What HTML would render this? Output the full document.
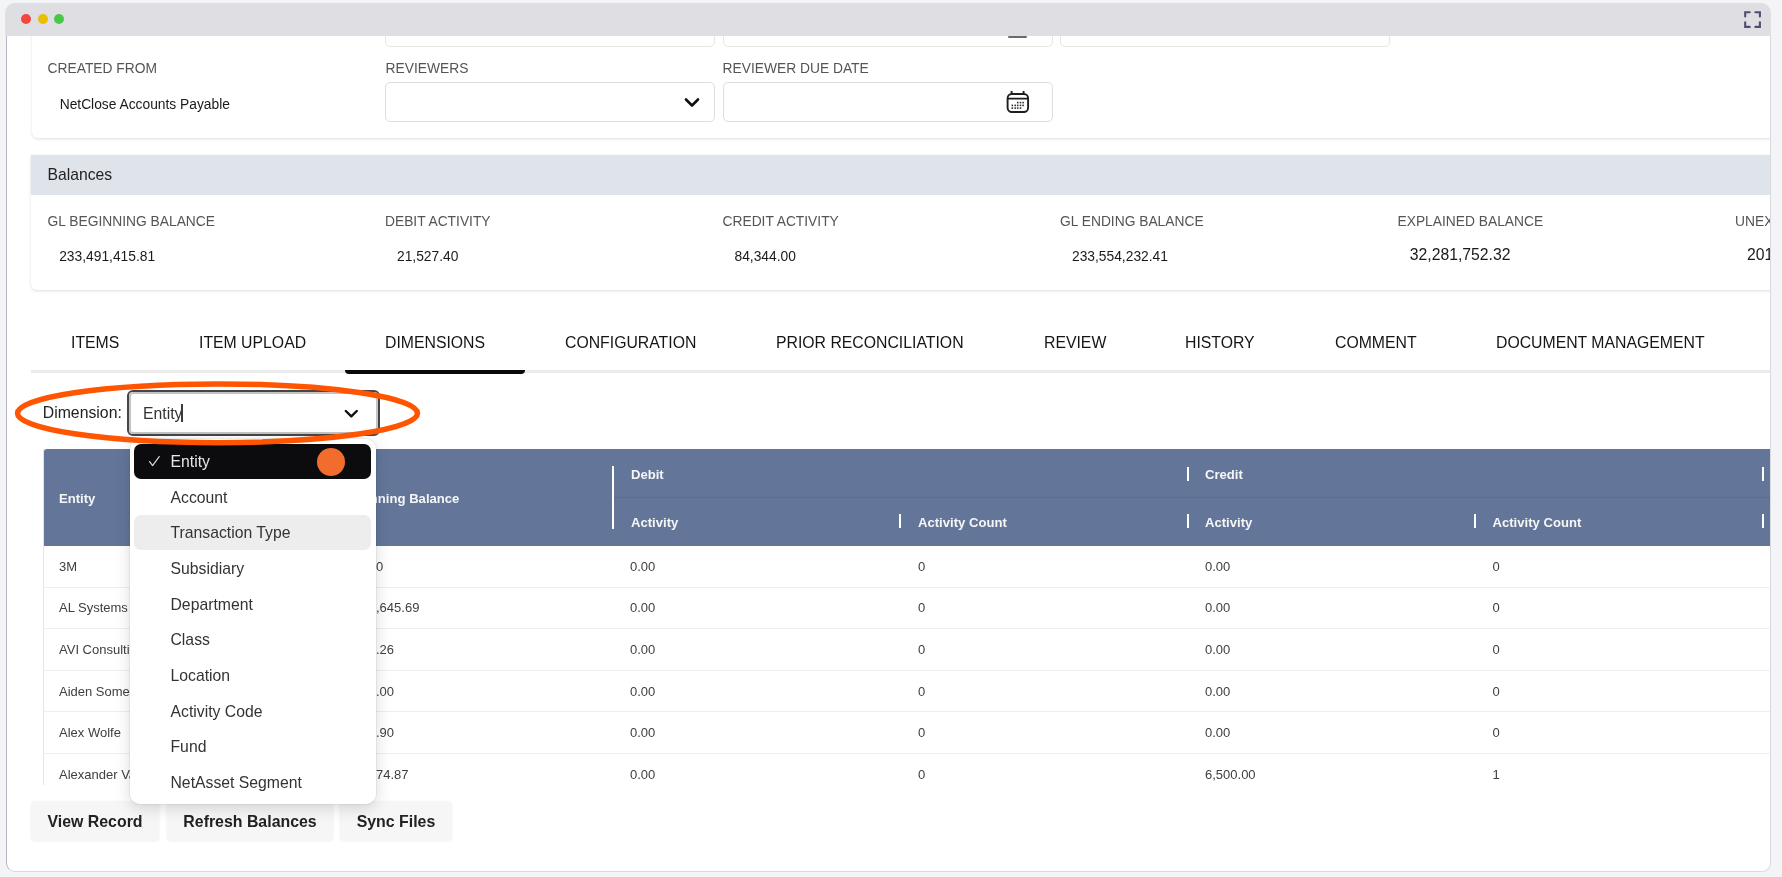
<!DOCTYPE html>
<html><head><meta charset="utf-8">
<style>
*{box-sizing:border-box;margin:0;padding:0}
html,body{width:1782px;height:877px;overflow:hidden;background:#f3f4f6;font-family:"Liberation Sans",sans-serif;color:#222}
.abs{position:absolute}
#win{position:absolute;left:5.5px;top:30px;width:1765.5px;height:842px;border-radius:0 0 9px 9px;background:#fff;border:1.5px solid #dad9e0;border-top:0;border-left:1.5px solid #b8b6c6}
#clip{will-change:transform;position:absolute;left:7px;top:36px;width:1763px;height:834px;overflow:hidden;border-radius:0 0 9px 9px}
#in{position:absolute;left:-7px;top:-36px;width:1782px;height:877px}
#tb{position:absolute;left:5px;top:3px;width:1766px;height:33px;background:#dfdee3;border-radius:10px 10px 0 0}
.dot{position:absolute;top:10px;width:10px;height:10px;border-radius:50%}
.lbl{position:absolute;font-size:13.8px;color:#555;white-space:nowrap;line-height:1}
.val{position:absolute;font-size:13.8px;color:#1a1a1a;white-space:nowrap;line-height:1}
.field{position:absolute;border:1px solid #dedede;border-radius:5px;background:#fff}
.card{position:absolute;background:#fff;border-radius:6px;box-shadow:0 1px 3px rgba(0,0,0,0.14)}
.btn{position:absolute;top:801px;height:39.3px;background:#f6f6f6;border-radius:4px;box-shadow:0 1px 3px rgba(0,0,0,0.07);padding-top:0.6px;font-size:15.9px;font-weight:700;color:#222;text-align:center;line-height:39.5px;white-space:nowrap}
.tab{position:absolute;top:334.6px;font-size:15.8px;color:#151515;white-space:nowrap;line-height:1}
</style></head><body>
<div id="win"></div>
<div id="clip"><div id="in">
  <!-- top card -->
  <div class="card" style="left:31.5px;top:-20px;width:1800px;height:158px;box-shadow:0 1px 3px rgba(0,0,0,0.13)"></div>
  <div class="field" style="left:385px;top:8px;width:330px;height:38.5px;border-color:#e6e6e6"></div>
  <div class="field" style="left:723px;top:8px;width:330px;height:38.5px;border-color:#e6e6e6"></div>
  <div class="field" style="left:1060px;top:8px;width:330px;height:38.5px;border-color:#e6e6e6"></div>
  <div class="lbl" style="left:47.6px;top:62px">CREATED FROM</div>
  <div class="lbl" style="left:385.6px;top:62px">REVIEWERS</div>
  <div class="lbl" style="left:722.6px;top:62px">REVIEWER DUE DATE</div>
  <div class="val" style="left:59.7px;top:98px">NetClose Accounts Payable</div>
  <div class="field" style="left:385px;top:82px;width:330px;height:40px"></div>
  <div class="field" style="left:723px;top:82px;width:330px;height:40px"></div>

  <!-- balances card -->
  <div class="card" style="left:31px;top:155px;width:1800px;height:135px;overflow:hidden;border-radius:0 0 6px 6px">
    <div class="abs" style="left:0;top:0;width:100%;height:40px;background:#dfe3ea"></div>
  </div>
  <div class="abs" style="left:47.6px;top:167px;font-size:15.7px;line-height:1;color:#222">Balances</div>
  <div class="lbl" style="left:47.6px;top:215px">GL BEGINNING BALANCE</div>
  <div class="lbl" style="left:385px;top:215px">DEBIT ACTIVITY</div>
  <div class="lbl" style="left:722.5px;top:215px">CREDIT ACTIVITY</div>
  <div class="lbl" style="left:1060px;top:215px">GL ENDING BALANCE</div>
  <div class="lbl" style="left:1397.5px;top:215px">EXPLAINED BALANCE</div>
  <div class="lbl" style="left:1735px;top:215px">UNEXPLAINED BALANCE</div>
  <div class="val" style="left:59.2px;top:250px">233,491,415.81</div>
  <div class="val" style="left:397px;top:250px">21,527.40</div>
  <div class="val" style="left:734.5px;top:250px">84,344.00</div>
  <div class="val" style="left:1072px;top:250px">233,554,232.41</div>
  <div class="val" style="left:1409.8px;top:246.8px;font-size:15.75px">32,281,752.32</div>
  <div class="val" style="left:1747px;top:246.8px;font-size:15.75px">201,272,479.09</div>

  <!-- tabs -->
  <div class="abs" style="left:31px;top:370px;width:1760px;height:3px;background:#ebebeb"></div>
  <div class="abs" style="left:345.2px;top:370px;width:179.8px;height:4.3px;background:#080808;border-radius:0 0 4px 4px"></div>
  <div class="tab" style="left:71px">ITEMS</div>
  <div class="tab" style="left:199px">ITEM UPLOAD</div>
  <div class="tab" style="left:385px">DIMENSIONS</div>
  <div class="tab" style="left:565px">CONFIGURATION</div>
  <div class="tab" style="left:776px">PRIOR RECONCILIATION</div>
  <div class="tab" style="left:1044px">REVIEW</div>
  <div class="tab" style="left:1185px">HISTORY</div>
  <div class="tab" style="left:1335px">COMMENT</div>
  <div class="tab" style="left:1496px">DOCUMENT MANAGEMENT</div>

  <!-- icons in top fields -->
  <svg class="abs" style="left:684px;top:97px" width="16" height="11" viewBox="0 0 16 11" fill="none" stroke="#111" stroke-width="2.6" stroke-linecap="round" stroke-linejoin="round"><path d="M2 2.5L8 8.5L14 2.5"/></svg>
  <svg class="abs" style="left:1005px;top:90px" width="26" height="26" viewBox="0 0 26 26" fill="none" stroke="#1e1e1e" stroke-width="1.9"><rect x="2.6" y="4" width="20.5" height="18" rx="4.2"/><path d="M2.6 8.6H23.1M6.6 1V4.5M18.6 1V4.5"/><g fill="#333" stroke="none"><rect x="11.9" y="11.8" width="1.6" height="1.6"/><rect x="14.7" y="11.8" width="1.6" height="1.6"/><rect x="17.3" y="11.8" width="1.6" height="1.6"/><rect x="6.5" y="14.6" width="1.6" height="1.6"/><rect x="9.4" y="14.6" width="1.6" height="1.6"/><rect x="11.9" y="14.6" width="1.6" height="1.6"/><rect x="14.7" y="14.6" width="1.6" height="1.6"/><rect x="17.3" y="14.6" width="1.6" height="1.6"/><rect x="6.5" y="17.3" width="1.6" height="1.6"/><rect x="9.4" y="17.3" width="1.6" height="1.6"/><rect x="11.9" y="17.3" width="1.6" height="1.6"/><rect x="14.7" y="17.3" width="1.6" height="1.6"/></g></svg>
  <div class="abs" style="left:1008.3px;top:36.2px;width:18.7px;height:1.9px;background:#6a6a6a;border-radius:1px"></div>

  <!-- dimension -->
  <div class="abs" style="left:42.8px;top:405.3px;font-size:15.8px;line-height:1;color:#222">Dimension:</div>
  <div class="abs" style="left:127px;top:390px;width:252.5px;height:46.3px;border:2px solid #464646;border-radius:6px;background:#fff">
    <div class="abs" style="left:0;top:0;right:0;bottom:0;border:2px solid #c4c4c4;border-radius:4px"></div>
  </div>
  <div class="abs" style="left:143px;top:406px;font-size:15.76px;line-height:1;color:#333">Entity</div>
  <div class="abs" style="left:181.4px;top:404.4px;width:1.8px;height:17.3px;background:#3a3a3a"></div>
  <svg class="abs" style="left:342px;top:407px" width="18" height="13" viewBox="0 0 18 13" fill="none" stroke="#111" stroke-width="2.4" stroke-linecap="round" stroke-linejoin="round"><path d="M3.8 4L9.3 9.4L14.8 4"/></svg>

  <!-- table -->
  <div class="abs" style="left:43px;top:449px;width:1760px;height:336px;overflow:hidden;border-left:1px solid #e4e4e4">
    <div class="abs" style="left:0;top:0;width:100%;height:97px;background:#63769a;border-radius:3px 0 0 0"></div>
    <div class="abs" style="left:570px;top:47.5px;width:1200px;height:1px;background:#5a6d8f"></div>
  </div>
  <div style="position:absolute;font-size:13.1px;font-weight:700;color:#f6f6f6;line-height:1;white-space:nowrap;left:59px;top:491.5px">Entity</div>
<div style="position:absolute;font-size:13.1px;font-weight:700;color:#f6f6f6;line-height:1;white-space:nowrap;left:341.5px;top:491.5px">Beginning Balance</div>
<div style="position:absolute;font-size:13.1px;font-weight:700;color:#f6f6f6;line-height:1;white-space:nowrap;left:631px;top:468px">Debit</div>
<div style="position:absolute;font-size:13.1px;font-weight:700;color:#f6f6f6;line-height:1;white-space:nowrap;left:631px;top:515.5px">Activity</div>
<div style="position:absolute;font-size:13.1px;font-weight:700;color:#f6f6f6;line-height:1;white-space:nowrap;left:918px;top:515.5px">Activity Count</div>
<div style="position:absolute;font-size:13.1px;font-weight:700;color:#f6f6f6;line-height:1;white-space:nowrap;left:1205px;top:468px">Credit</div>
<div style="position:absolute;font-size:13.1px;font-weight:700;color:#f6f6f6;line-height:1;white-space:nowrap;left:1205px;top:515.5px">Activity</div>
<div style="position:absolute;font-size:13.1px;font-weight:700;color:#f6f6f6;line-height:1;white-space:nowrap;left:1492.5px;top:515.5px">Activity Count</div>
<div class="abs" style="left:612px;top:465.5px;width:2px;height:63.0px;background:#fff"></div>
<div class="abs" style="left:899px;top:514px;width:2px;height:14px;background:#fff"></div>
<div class="abs" style="left:1187px;top:514px;width:2px;height:14px;background:#fff"></div>
<div class="abs" style="left:1474px;top:514px;width:2px;height:14px;background:#fff"></div>
<div class="abs" style="left:1762px;top:514px;width:2px;height:14px;background:#fff"></div>
<div class="abs" style="left:1187px;top:466.5px;width:2px;height:14.0px;background:#fff"></div>
<div class="abs" style="left:1762px;top:466.5px;width:2px;height:14.0px;background:#fff"></div>
<div class="abs" style="left:43px;top:546px;width:1730px;height:239px;overflow:hidden">
<div class="abs" style="left:0;top:40.6px;width:100%;height:1px;background:#efefef"></div>
<div style="position:absolute;font-size:13px;color:#404040;line-height:1;white-space:nowrap;left:16px;top:13.8px">3M</div>
<div style="position:absolute;font-size:13px;color:#404040;line-height:1;white-space:nowrap;left:333px;top:13.8px">0</div>
<div style="position:absolute;font-size:13px;color:#404040;line-height:1;white-space:nowrap;left:587px;top:13.8px">0.00</div>
<div style="position:absolute;font-size:13px;color:#404040;line-height:1;white-space:nowrap;left:875px;top:13.8px">0</div>
<div style="position:absolute;font-size:13px;color:#404040;line-height:1;white-space:nowrap;left:1162px;top:13.8px">0.00</div>
<div style="position:absolute;font-size:13px;color:#404040;line-height:1;white-space:nowrap;left:1449.5px;top:13.8px">0</div>
<div class="abs" style="left:0;top:82.2px;width:100%;height:1px;background:#efefef"></div>
<div style="position:absolute;font-size:13px;color:#404040;line-height:1;white-space:nowrap;left:16px;top:55.4px">AL Systems</div>
<div style="position:absolute;font-size:13px;color:#404040;line-height:1;white-space:nowrap;left:333px;top:55.4px">,645.69</div>
<div style="position:absolute;font-size:13px;color:#404040;line-height:1;white-space:nowrap;left:587px;top:55.4px">0.00</div>
<div style="position:absolute;font-size:13px;color:#404040;line-height:1;white-space:nowrap;left:875px;top:55.4px">0</div>
<div style="position:absolute;font-size:13px;color:#404040;line-height:1;white-space:nowrap;left:1162px;top:55.4px">0.00</div>
<div style="position:absolute;font-size:13px;color:#404040;line-height:1;white-space:nowrap;left:1449.5px;top:55.4px">0</div>
<div class="abs" style="left:0;top:123.8px;width:100%;height:1px;background:#efefef"></div>
<div style="position:absolute;font-size:13px;color:#404040;line-height:1;white-space:nowrap;left:16px;top:97.0px">AVI Consulting</div>
<div style="position:absolute;font-size:13px;color:#404040;line-height:1;white-space:nowrap;left:333px;top:97.0px">.26</div>
<div style="position:absolute;font-size:13px;color:#404040;line-height:1;white-space:nowrap;left:587px;top:97.0px">0.00</div>
<div style="position:absolute;font-size:13px;color:#404040;line-height:1;white-space:nowrap;left:875px;top:97.0px">0</div>
<div style="position:absolute;font-size:13px;color:#404040;line-height:1;white-space:nowrap;left:1162px;top:97.0px">0.00</div>
<div style="position:absolute;font-size:13px;color:#404040;line-height:1;white-space:nowrap;left:1449.5px;top:97.0px">0</div>
<div class="abs" style="left:0;top:165.4px;width:100%;height:1px;background:#efefef"></div>
<div style="position:absolute;font-size:13px;color:#404040;line-height:1;white-space:nowrap;left:16px;top:138.6px">Aiden Somerset</div>
<div style="position:absolute;font-size:13px;color:#404040;line-height:1;white-space:nowrap;left:333px;top:138.6px">.00</div>
<div style="position:absolute;font-size:13px;color:#404040;line-height:1;white-space:nowrap;left:587px;top:138.6px">0.00</div>
<div style="position:absolute;font-size:13px;color:#404040;line-height:1;white-space:nowrap;left:875px;top:138.6px">0</div>
<div style="position:absolute;font-size:13px;color:#404040;line-height:1;white-space:nowrap;left:1162px;top:138.6px">0.00</div>
<div style="position:absolute;font-size:13px;color:#404040;line-height:1;white-space:nowrap;left:1449.5px;top:138.6px">0</div>
<div class="abs" style="left:0;top:207.0px;width:100%;height:1px;background:#efefef"></div>
<div style="position:absolute;font-size:13px;color:#404040;line-height:1;white-space:nowrap;left:16px;top:180.2px">Alex Wolfe</div>
<div style="position:absolute;font-size:13px;color:#404040;line-height:1;white-space:nowrap;left:333px;top:180.2px">.90</div>
<div style="position:absolute;font-size:13px;color:#404040;line-height:1;white-space:nowrap;left:587px;top:180.2px">0.00</div>
<div style="position:absolute;font-size:13px;color:#404040;line-height:1;white-space:nowrap;left:875px;top:180.2px">0</div>
<div style="position:absolute;font-size:13px;color:#404040;line-height:1;white-space:nowrap;left:1162px;top:180.2px">0.00</div>
<div style="position:absolute;font-size:13px;color:#404040;line-height:1;white-space:nowrap;left:1449.5px;top:180.2px">0</div>
<div class="abs" style="left:0;top:248.6px;width:100%;height:1px;background:#efefef"></div>
<div style="position:absolute;font-size:13px;color:#404040;line-height:1;white-space:nowrap;left:16px;top:221.8px">Alexander Vance</div>
<div style="position:absolute;font-size:13px;color:#404040;line-height:1;white-space:nowrap;left:333px;top:221.8px">74.87</div>
<div style="position:absolute;font-size:13px;color:#404040;line-height:1;white-space:nowrap;left:587px;top:221.8px">0.00</div>
<div style="position:absolute;font-size:13px;color:#404040;line-height:1;white-space:nowrap;left:875px;top:221.8px">0</div>
<div style="position:absolute;font-size:13px;color:#404040;line-height:1;white-space:nowrap;left:1162px;top:221.8px">6,500.00</div>
<div style="position:absolute;font-size:13px;color:#404040;line-height:1;white-space:nowrap;left:1449.5px;top:221.8px">1</div>
</div>

  <!-- buttons -->
  <div class="btn" style="left:31px;width:128px">View Record</div>
  <div class="btn" style="left:167px;width:166px">Refresh Balances</div>
  <div class="btn" style="left:340px;width:112px">Sync Files</div>


  <!-- dropdown -->
  <div class="abs" style="left:130px;top:439px;width:246px;height:365.2px;background:#fff;border-radius:10px;box-shadow:0 4px 16px rgba(0,0,0,0.15),0 0 0 1px rgba(0,0,0,0.05)">
    <div class="abs" style="left:4px;top:5px;width:237px;height:35px;background:#0c0c0e;border-radius:7px"></div>
    <div class="abs" style="left:4px;top:76px;width:237px;height:35px;background:#ededed;border-radius:7px"></div>
    <svg class="abs" style="left:17px;top:16px" width="14" height="13" viewBox="0 0 14 13" fill="none" stroke="#d8d8d8" stroke-width="1.2" stroke-linecap="round" stroke-linejoin="round"><path d="M2.6 6.6L5.6 10.6L12.2 1.6"/></svg>
    <div class="abs" style="left:187px;top:9.4px;width:28px;height:28px;border-radius:50%;background:#f26c2e"></div>
    <div style="position:absolute;left:40.5px;top:14.8px;font-size:15.76px;line-height:1;color:#e6e6e6;white-space:nowrap">Entity</div>
<div style="position:absolute;left:40.5px;top:50.5px;font-size:15.76px;line-height:1;color:#333;white-space:nowrap">Account</div>
<div style="position:absolute;left:40.5px;top:86.1px;font-size:15.76px;line-height:1;color:#333;white-space:nowrap">Transaction Type</div>
<div style="position:absolute;left:40.5px;top:121.8px;font-size:15.76px;line-height:1;color:#333;white-space:nowrap">Subsidiary</div>
<div style="position:absolute;left:40.5px;top:157.5px;font-size:15.76px;line-height:1;color:#333;white-space:nowrap">Department</div>
<div style="position:absolute;left:40.5px;top:193.2px;font-size:15.76px;line-height:1;color:#333;white-space:nowrap">Class</div>
<div style="position:absolute;left:40.5px;top:228.8px;font-size:15.76px;line-height:1;color:#333;white-space:nowrap">Location</div>
<div style="position:absolute;left:40.5px;top:264.5px;font-size:15.76px;line-height:1;color:#333;white-space:nowrap">Activity Code</div>
<div style="position:absolute;left:40.5px;top:300.2px;font-size:15.76px;line-height:1;color:#333;white-space:nowrap">Fund</div>
<div style="position:absolute;left:40.5px;top:335.8px;font-size:15.76px;line-height:1;color:#333;white-space:nowrap">NetAsset Segment</div>
  </div>
  <!-- ellipse -->
  <svg class="abs" style="left:0;top:0" width="1782" height="877"><ellipse cx="217.5" cy="413.3" rx="200" ry="29.4" fill="none" stroke="#ff5500" stroke-width="5.5"/></svg>
</div></div>
<div id="tb">
  <div class="dot" style="left:16px;top:11px;background:#f2473f"></div>
  <div class="dot" style="left:33px;top:11px;background:#e9c001"></div>
  <div class="dot" style="left:49.2px;top:11px;background:#4ac845"></div>
  <svg class="abs" style="left:1739px;top:8px" width="18" height="18" viewBox="0 0 18 18" fill="none" stroke="#514d72" stroke-width="2.1" stroke-linecap="round">
    <path d="M1.2 5.5V1.2H5.7M11.4 1.2H15.9V5.5M15.9 11.2V15.9H11.4M5.7 15.9H1.2V11.2"/>
  </svg>
</div>
</body></html>
